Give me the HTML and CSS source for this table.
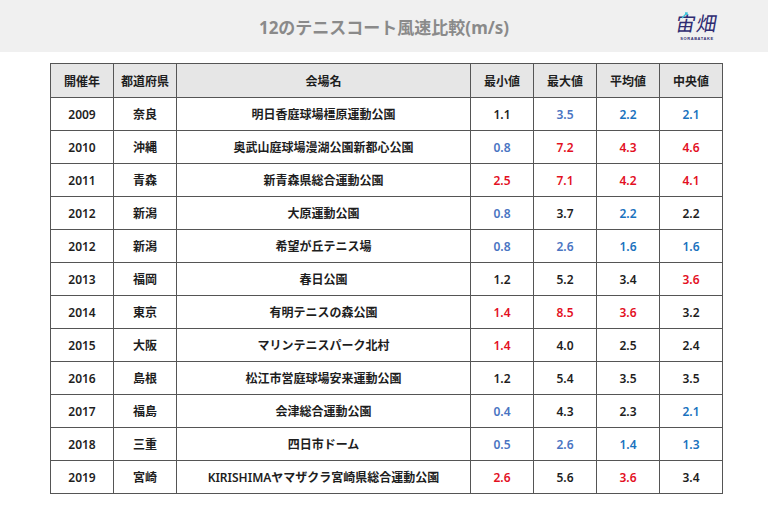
FILE: index.html
```html
<!DOCTYPE html>
<html lang="ja">
<head>
<meta charset="utf-8">
<link rel="stylesheet" href="styles.css">
</head>
<body>
<header class="topbar">
  <div class="spacer"></div>
  <h1 class="title">12のテニスコート風速比較(m/s)</h1>
  <div class="logo">
    <div class="logo-mark">
      <span class="logo-text">宙畑</span>
      <svg class="logo-accent" width="8" height="8" viewBox="0 0 8 8"><path d="M1 7 L6 2 M4 2 H6 V4" stroke="#3cc3d8" stroke-width="1.4" fill="none"/></svg>
    </div>
    <div class="logo-sub">SORABATAKE</div>
  </div>
</header>
<main class="content">
<table class="wind">
  <colgroup>
    <col class="c-s"><col class="c-s"><col class="c-l"><col class="c-s"><col class="c-s"><col class="c-s"><col class="c-s">
  </colgroup>
  <thead>
    <tr><th>開催年</th><th>都道府県</th><th>会場名</th><th>最小値</th><th>最大値</th><th>平均値</th><th>中央値</th></tr>
  </thead>
  <tbody>
    <tr><td>2009</td><td>奈良</td><td>明日香庭球場橿原運動公園</td><td>1.1</td><td class="lb">3.5</td><td class="b">2.2</td><td class="b">2.1</td></tr>
    <tr><td>2010</td><td>沖縄</td><td>奥武山庭球場漫湖公園新都心公園</td><td class="lb">0.8</td><td class="r">7.2</td><td class="r">4.3</td><td class="r">4.6</td></tr>
    <tr><td>2011</td><td>青森</td><td>新青森県総合運動公園</td><td class="r">2.5</td><td class="r">7.1</td><td class="r">4.2</td><td class="r">4.1</td></tr>
    <tr><td>2012</td><td>新潟</td><td>大原運動公園</td><td class="lb">0.8</td><td>3.7</td><td class="b">2.2</td><td>2.2</td></tr>
    <tr><td>2012</td><td>新潟</td><td>希望が丘テニス場</td><td class="lb">0.8</td><td class="lb">2.6</td><td class="b">1.6</td><td class="b">1.6</td></tr>
    <tr><td>2013</td><td>福岡</td><td>春日公園</td><td>1.2</td><td>5.2</td><td>3.4</td><td class="r">3.6</td></tr>
    <tr><td>2014</td><td>東京</td><td>有明テニスの森公園</td><td class="r">1.4</td><td class="r">8.5</td><td class="r">3.6</td><td>3.2</td></tr>
    <tr><td>2015</td><td>大阪</td><td>マリンテニスパーク北村</td><td class="r">1.4</td><td>4.0</td><td>2.5</td><td>2.4</td></tr>
    <tr><td>2016</td><td>島根</td><td>松江市営庭球場安来運動公園</td><td>1.2</td><td>5.4</td><td>3.5</td><td>3.5</td></tr>
    <tr><td>2017</td><td>福島</td><td>会津総合運動公園</td><td class="lb">0.4</td><td>4.3</td><td>2.3</td><td class="b">2.1</td></tr>
    <tr><td>2018</td><td>三重</td><td>四日市ドーム</td><td class="lb">0.5</td><td class="lb">2.6</td><td class="b">1.4</td><td class="b">1.3</td></tr>
    <tr><td>2019</td><td>宮崎</td><td>KIRISHIMAヤマザクラ宮崎県総合運動公園</td><td class="r">2.6</td><td>5.6</td><td class="r">3.6</td><td>3.4</td></tr>
  </tbody>
</table>
</main>
</body>
</html>
```

FILE: styles.css
```css
html, body {
  margin: 0;
  padding: 0;
  background: #ffffff;
  font-family: "Noto Sans", "Noto Sans CJK JP", sans-serif;
}

.topbar {
  height: 52px;
  background: #f0f0f0;
  display: grid;
  grid-template-columns: 1fr auto 1fr;
  align-items: center;
}

.title {
  margin: 0;
  font-size: 17px;
  font-weight: 700;
  color: #8a8a8a;
}

.logo {
  justify-self: end;
  margin-right: 50px;
  display: flex;
  flex-direction: column;
  align-items: center;
  padding-top: 2px;
}

.logo-mark {
  position: relative;
  line-height: 1;
}

.logo-text {
  font-family: "Noto Sans CJK JP", sans-serif;
  font-size: 20px;
  font-weight: 400;
  color: #2f2c72;
  display: inline-block;
  transform: skewX(-10deg);
  letter-spacing: 1px;
}

.logo-accent {
  position: absolute;
  left: 5px;
  top: -2px;
}

.logo-sub {
  font-family: "Liberation Sans", sans-serif;
  font-size: 4px;
  font-weight: 700;
  color: #2f2c72;
  letter-spacing: 0.6px;
  margin-top: 3px;
}

.content {
  padding: 11px 0 0 50px;
}

.wind {
  border-collapse: collapse;
  table-layout: fixed;
  width: 673px;
}

.c-s { width: 63px; }
.c-l { width: 294px; }

.wind th, .wind td {
  border: 1px solid #555555;
  text-align: center;
  font-size: 12px;
  font-weight: 600;
  color: #1e1e1e;
  padding: 0;
  height: 32px;
}

.wind th {
  background: #e6e6e6;
  height: 33px;
}

.wind td.lb { color: #4a74c2; }
.wind td.b { color: #1a72be; }
.wind td.r { color: #e3101f; }
```
